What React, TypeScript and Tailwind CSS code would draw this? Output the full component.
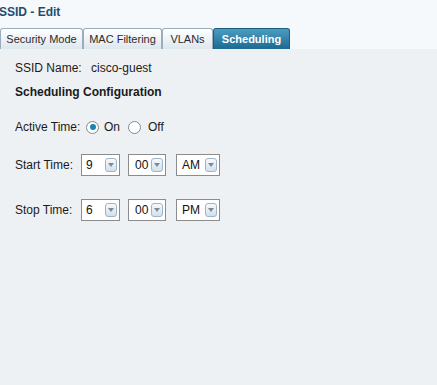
import { useState } from 'react';

type TimeSelectProps = {
  value: string;
  width: string;
  pad: string;
};

const TimeSelect = ({ value, width, pad }: TimeSelectProps) => {
  return (
    <div
      className={`flex h-[22px] items-center justify-between border border-[#8c8c8c] bg-white pr-[2px] ${width} ${pad}`}
    >
      <span className="text-[12px] text-[#111]">{value}</span>
      <span className="flex h-[14px] w-[12px] items-center justify-center rounded-[3px] border border-[#9db5c7] bg-gradient-to-b from-[#f6f9fb] to-[#d3e0ea]">
        <svg width="6" height="4" viewBox="0 0 6 4">
          <path d="M0 0 L6 0 L3 4 Z" fill="#7d8a96" />
        </svg>
      </span>
    </div>
  );
};

const Radio = ({ checked, onClick }: { checked: boolean; onClick: () => void }) => {
  return (
    <button
      type="button"
      onClick={onClick}
      className="flex h-[13px] w-[13px] items-center justify-center rounded-full border border-[#7f8a94] bg-white"
    >
      {checked && <span className="h-[6px] w-[6px] rounded-full bg-[#1b82b6]" />}
    </button>
  );
};

const tabs = [
  { label: 'Security Mode', width: 'w-[83px]' },
  { label: 'MAC Filtering', width: 'w-[79px]' },
  { label: 'VLANs', width: 'w-[51px]' },
  { label: 'Scheduling', width: 'w-[77px]' },
];

export default function App() {
  const [active, setActive] = useState(true);

  return (
    <div
      className="flex h-[385px] w-[437px] flex-col bg-[#eef1f4] text-[#1a1a1a]"
      style={{ fontFamily: '"Liberation Sans", Arial, sans-serif' }}
    >
      <div className="flex h-[49px] flex-col bg-[#f5f9fb]">
        <div className="-ml-[1px] pt-[5px] text-[12px] font-bold leading-[14px] text-[#1f4d6d]">
          SSID - Edit
        </div>
        <div className="mt-auto flex items-end">
          {tabs.map((tab) => {
            const isActive = tab.label === 'Scheduling';
            return (
              <div
                key={tab.label}
                className={
                  isActive
                    ? `flex h-[21px] items-center justify-center rounded-t-[3px] border border-b-0 border-[#1b5f80] bg-gradient-to-b from-[#4c9cc2] to-[#1a6a92] text-[11px] font-bold text-white ${tab.width}`
                    : `flex h-[21px] items-center justify-center rounded-t-[3px] border border-b-0 border-[#98aebd] bg-gradient-to-b from-[#ffffff] to-[#dde7ee] text-[11px] text-[#2b2b2b] ${tab.width}`
                }
              >
                {tab.label}
              </div>
            );
          })}
        </div>
      </div>

      <div className="flex flex-col pl-[15px] text-[12px]">
        <div className="mt-[12px] flex h-[14px] items-center">
          <span className="w-[76px]">SSID Name:</span>
          <span>cisco-guest</span>
        </div>
        <div className="mt-[10px] flex h-[14px] items-center font-bold">Scheduling Configuration</div>
        <div className="mt-[21px] flex h-[14px] items-center">
          <span className="w-[71px]">Active Time:</span>
          <Radio checked={active} onClick={() => setActive(true)} />
          <span className="ml-[5px] w-[24px]">On</span>
          <Radio checked={!active} onClick={() => setActive(false)} />
          <span className="ml-[7px]">Off</span>
        </div>
        <div className="mt-[20px] flex items-center">
          <span className="w-[66px]">Start Time:</span>
          <TimeSelect value="9" width="w-[39px]" pad="pl-[4px]" />
          <div className="ml-[8px]">
            <TimeSelect value="00" width="w-[38px]" pad="pl-[6px]" />
          </div>
          <div className="ml-[10px]">
            <TimeSelect value="AM" width="w-[44px]" pad="pl-[5px]" />
          </div>
        </div>
        <div className="mt-[23px] flex items-center">
          <span className="w-[66px]">Stop Time:</span>
          <TimeSelect value="6" width="w-[39px]" pad="pl-[4px]" />
          <div className="ml-[8px]">
            <TimeSelect value="00" width="w-[38px]" pad="pl-[6px]" />
          </div>
          <div className="ml-[10px]">
            <TimeSelect value="PM" width="w-[44px]" pad="pl-[5px]" />
          </div>
        </div>
      </div>
    </div>
  );
}
